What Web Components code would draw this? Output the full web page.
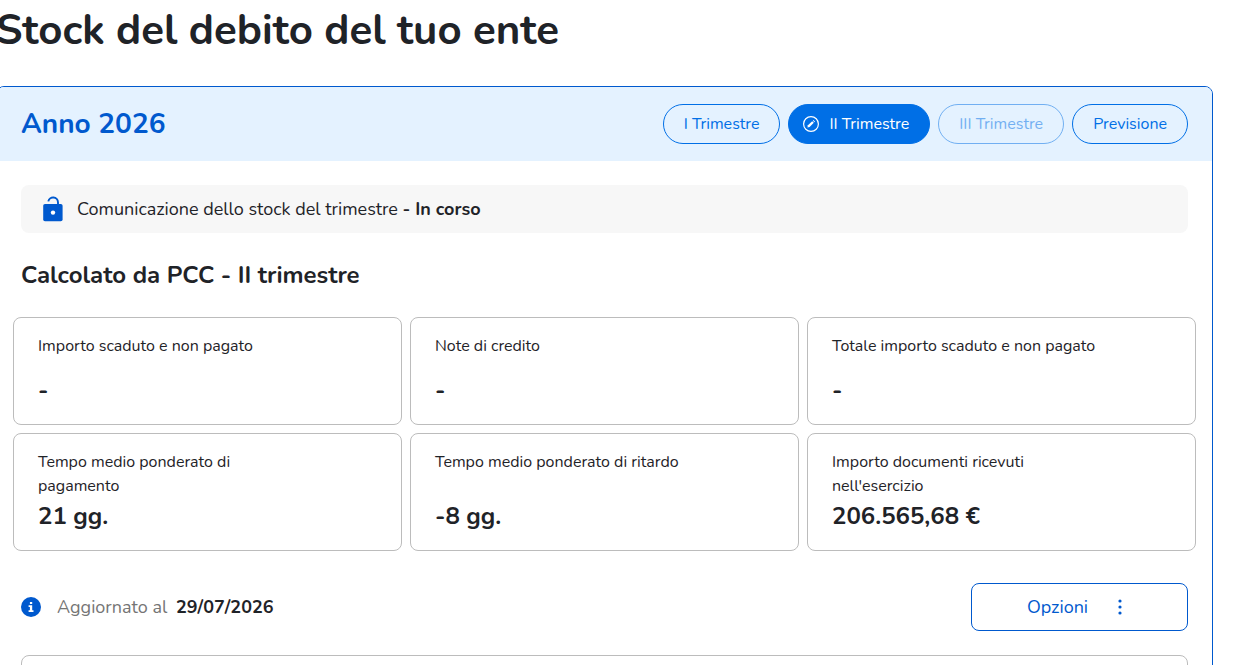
<!DOCTYPE html>
<html lang="it">
<head>
<meta charset="utf-8">
<meta name="viewport" content="width=device-width, initial-scale=1">
<title>Stock del debito</title>
<style>
  body {
    margin: 0;
    background: #ffffff;
    color: #1f2328;
    font-family: Nunito, "Open Sans", "Noto Sans", sans-serif;
    font-size: 16px;
    line-height: 24px;
    overflow-x: hidden;
  }
</style>
</head>
<body>
<debt-page>
  <span slot="title">Stock del debito del tuo ente</span>

  <year-panel year="Anno 2026">
    <quarter-pill slot="periods">I Trimestre</quarter-pill>
    <quarter-pill slot="periods" active>II Trimestre</quarter-pill>
    <quarter-pill slot="periods" disabled>III Trimestre</quarter-pill>
    <quarter-pill slot="periods">Previsione</quarter-pill>

    <status-bar>Comunicazione dello stock del trimestre <b>- In corso</b></status-bar>

    <metric-grid heading="Calcolato da PCC - II trimestre">
      <metric-card value="-">Importo scaduto e non pagato</metric-card>
      <metric-card value="-">Note di credito</metric-card>
      <metric-card value="-">Totale importo scaduto e non pagato</metric-card>
      <metric-card value="21 gg.">Tempo medio ponderato di<br>pagamento</metric-card>
      <metric-card value="-8 gg.">Tempo medio ponderato di ritardo</metric-card>
      <metric-card value="206.565,68 €">Importo documenti ricevuti<br>nell'esercizio</metric-card>
    </metric-grid>

    <update-row date="29/07/2026">
      <options-button slot="action">Opzioni</options-button>
    </update-row>

    <detail-box></detail-box>
  </year-panel>
</debt-page>

<script>
class DebtPage extends HTMLElement {
  constructor() {
    super();
    this.attachShadow({ mode: 'open' });
  }

  connectedCallback() {
    this.shadowRoot.innerHTML = `
      <style>
        :host {
          display: block;
          padding-top: 6px;
          margin-left: -4px;
          margin-right: 34px;
        }

        h1 {
          margin: 0 0 30px;
          font-size: 42px;
          line-height: 50px;
          font-weight: 700;
        }
      </style>
      <main>
        <h1><slot name="title"></slot></h1>
        <slot></slot>
      </main>
    `;
  }
}

class YearPanel extends HTMLElement {
  constructor() {
    super();
    this.attachShadow({ mode: 'open' });
  }

  connectedCallback() {
    this.shadowRoot.innerHTML = `
      <style>
        :host {
          display: block;
          border: 1px solid #0059ce;
          border-radius: 8px;
          overflow: hidden;
        }

        header {
          display: flex;
          align-items: center;
          justify-content: space-between;
          gap: 16px;
          padding: 17px 24px;
          background: #e4f2ff;
        }

        h2 {
          margin: 0;
          color: #0059ce;
          font-size: 28px;
          line-height: 40px;
          font-weight: 700;
        }

        nav {
          display: flex;
          gap: 8px;
        }

        .content {
          padding: 24px;
        }
      </style>
      <header>
        <h2>${this.getAttribute('year')}</h2>
        <nav><slot name="periods"></slot></nav>
      </header>
      <div class="content"><slot></slot></div>
    `;
  }
}

class QuarterPill extends HTMLElement {
  constructor() {
    super();
    this.attachShadow({ mode: 'open' });
  }

  connectedCallback() {
    const active = this.hasAttribute('active');
    const disabled = this.hasAttribute('disabled');
    const icon = `
      <svg width="20" height="20" viewBox="0 0 20 20" fill="none" aria-hidden="true">
        <circle cx="10" cy="10" r="7.4" stroke="currentColor" stroke-width="1.2"/>
        <path d="M6.4 13.6 L6.9 11.3 L11.2 7.2 L12.8 8.8 L8.6 13 Z" fill="currentColor"/>
        <path d="M11.8 6.6 L12.4 6 L14 7.6 L13.4 8.2 Z" fill="currentColor"/>
      </svg>`;

    this.shadowRoot.innerHTML = `
      <style>
        :host {
          display: block;
        }

        button {
          display: flex;
          align-items: center;
          gap: 8px;
          height: 40px;
          padding: 0 20px;
          border: 1px solid #006fe6;
          border-radius: 20px;
          background: transparent;
          color: #006fe6;
          font: inherit;
          white-space: nowrap;
          cursor: pointer;
        }

        button.active {
          padding-left: 12px;
          background: #006fe6;
          color: #ffffff;
        }

        button:disabled {
          opacity: 0.5;
          cursor: default;
        }
      </style>
      <button type="button" class="${active ? 'active' : ''}" aria-pressed="${active}" ${disabled ? 'disabled' : ''}>
        ${active ? icon : ''}
        <span><slot></slot></span>
      </button>
    `;
  }
}

class StatusBar extends HTMLElement {
  constructor() {
    super();
    this.attachShadow({ mode: 'open' });
  }

  connectedCallback() {
    this.shadowRoot.innerHTML = `
      <style>
        :host {
          display: flex;
          align-items: center;
          gap: 12px;
          min-height: 48px;
          padding: 0 20px;
          border-radius: 8px;
          background: #f7f7f7;
          font-size: 18px;
        }

        svg {
          flex: none;
        }
      </style>
      <svg width="24" height="28" viewBox="0 0 24 28" aria-hidden="true">
        <path d="M7.3 6.4 A4.9 4.9 0 0 1 17 7.2 V10" fill="none" stroke="#0059ce" stroke-width="1.9"/>
        <rect x="2.2" y="9" width="19.4" height="17.2" rx="1.8" fill="#0059ce"/>
        <circle cx="12" cy="17.6" r="2.2" fill="#ffffff"/>
      </svg>
      <span><slot></slot></span>
    `;
  }
}

class MetricGrid extends HTMLElement {
  constructor() {
    super();
    this.attachShadow({ mode: 'open' });
  }

  connectedCallback() {
    this.shadowRoot.innerHTML = `
      <style>
        :host {
          display: block;
          margin-top: 24px;
        }

        h3 {
          margin: 0 0 24px;
          font-size: 24px;
          line-height: 36px;
          font-weight: 700;
        }

        .grid {
          display: grid;
          grid-template-columns: repeat(3, 1fr);
          gap: 8px;
          margin: 0 -8px;
        }
      </style>
      <h3>${this.getAttribute('heading')}</h3>
      <div class="grid"><slot></slot></div>
    `;
  }
}

class MetricCard extends HTMLElement {
  constructor() {
    super();
    this.attachShadow({ mode: 'open' });
  }

  connectedCallback() {
    this.shadowRoot.innerHTML = `
      <style>
        :host {
          display: flex;
          flex-direction: column;
          justify-content: space-between;
          box-sizing: border-box;
          min-height: 108px;
          padding: 16px 24px;
          border: 1px solid #bcbcbc;
          border-radius: 8px;
        }

        strong {
          font-size: 24px;
          line-height: 36px;
          font-weight: 700;
        }
      </style>
      <span><slot></slot></span>
      <strong>${this.getAttribute('value')}</strong>
    `;
  }
}

class UpdateRow extends HTMLElement {
  constructor() {
    super();
    this.attachShadow({ mode: 'open' });
  }

  connectedCallback() {
    this.shadowRoot.innerHTML = `
      <style>
        :host {
          display: flex;
          align-items: center;
          justify-content: space-between;
          margin-top: 32px;
          font-size: 18px;
        }

        .info {
          display: flex;
          align-items: center;
          gap: 16px;
          color: #757575;
        }

        time {
          margin-left: 4px;
          color: #1f2328;
          font-weight: 700;
        }
      </style>
      <div class="info">
        <svg width="20" height="20" viewBox="0 0 20 20" aria-hidden="true">
          <circle cx="10" cy="10" r="10" fill="#0059ce"/>
          <path d="M8.9 4.9 H11.2 V7.1 H8.9 Z M7.6 8.3 H11.2 V13.3 H12.5 V15 H7.6 V13.3 H8.9 V10 H7.6 Z" fill="#ffffff"/>
        </svg>
        <span>Aggiornato al <time datetime="2026-07-29">${this.getAttribute('date')}</time></span>
      </div>
      <slot name="action"></slot>
    `;
  }
}

class OptionsButton extends HTMLElement {
  constructor() {
    super();
    this.attachShadow({ mode: 'open' });
  }

  connectedCallback() {
    this.shadowRoot.innerHTML = `
      <style>
        :host {
          display: block;
        }

        button {
          display: flex;
          align-items: center;
          justify-content: center;
          gap: 20px;
          min-width: 217px;
          height: 48px;
          padding: 0 24px;
          border: 1px solid #0059ce;
          border-radius: 8px;
          background: #ffffff;
          color: #0059ce;
          font: inherit;
          cursor: pointer;
        }
      </style>
      <button type="button" aria-haspopup="menu">
        <slot></slot>
        <svg width="24" height="24" viewBox="0 0 24 24" fill="currentColor" aria-hidden="true">
          <circle cx="12" cy="6" r="1.6"/>
          <circle cx="12" cy="12" r="1.6"/>
          <circle cx="12" cy="18" r="1.6"/>
        </svg>
      </button>
    `;
  }
}

class DetailBox extends HTMLElement {
  constructor() {
    super();
    this.attachShadow({ mode: 'open' });
  }

  connectedCallback() {
    this.shadowRoot.innerHTML = `
      <style>
        :host {
          display: block;
          min-height: 96px;
          margin-top: 24px;
          border: 1px solid #bcbcbc;
          border-radius: 8px;
        }
      </style>
      <slot></slot>
    `;
  }
}

customElements.define('debt-page', DebtPage);
customElements.define('year-panel', YearPanel);
customElements.define('quarter-pill', QuarterPill);
customElements.define('status-bar', StatusBar);
customElements.define('metric-grid', MetricGrid);
customElements.define('metric-card', MetricCard);
customElements.define('update-row', UpdateRow);
customElements.define('options-button', OptionsButton);
customElements.define('detail-box', DetailBox);
</script>
</body>
</html>
